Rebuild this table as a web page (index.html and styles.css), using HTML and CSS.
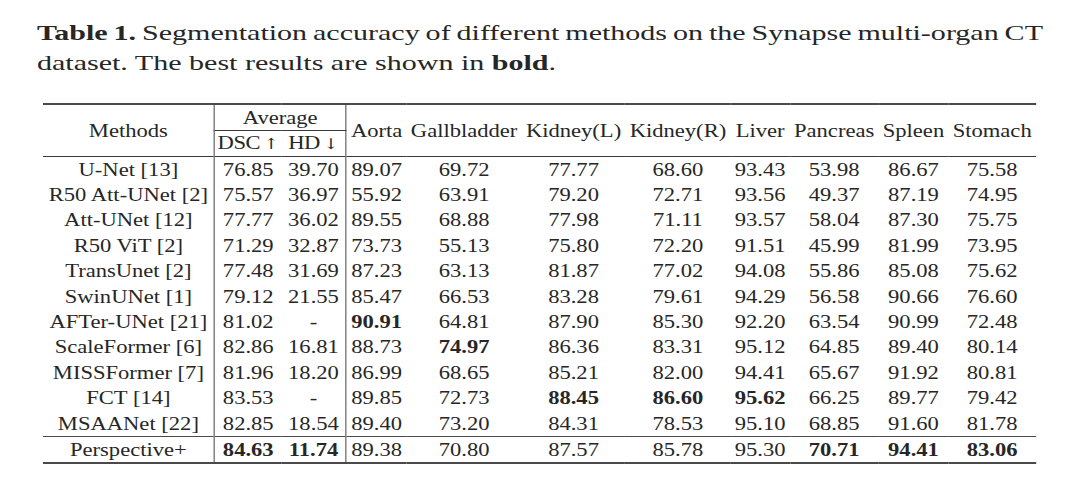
FILE: index.html
```html
<!DOCTYPE html>
<html>
<head>
<meta charset="utf-8">
<link rel="stylesheet" href="styles.css">
</head>
<body>
<div class="page">
  <div class="caption">
    <div class="cap-line first"><b>Table 1.</b> Segmentation accuracy of different methods on the Synapse multi-organ CT</div>
    <div class="cap-line">dataset. The best results are shown in <b>bold</b>.</div>
  </div>
  <table class="results">
    <thead>
      <tr class="hrow1">
        <th rowspan="2" class="method sep">Methods</th>
        <th colspan="2" class="avg sep">Average</th>
        <th rowspan="2">Aorta</th>
        <th rowspan="2">Gallbladder</th>
        <th rowspan="2">Kidney(L)</th>
        <th rowspan="2">Kidney(R)</th>
        <th rowspan="2">Liver</th>
        <th rowspan="2">Pancreas</th>
        <th rowspan="2">Spleen</th>
        <th rowspan="2">Stomach</th>
      </tr>
      <tr class="hrow2">
        <th class="metric dsc">DSC<span class="arrow">↑</span></th>
        <th class="metric hd sep">HD<span class="arrow">↓</span></th>
      </tr>
    </thead>
    <tbody>
      <tr><td class="method sep">U-Net [13]</td><td class="metric">76.85</td><td class="metric sep">39.70</td><td>89.07</td><td>69.72</td><td>77.77</td><td>68.60</td><td>93.43</td><td>53.98</td><td>86.67</td><td>75.58</td></tr>
      <tr><td class="method sep">R50 Att-UNet [2]</td><td class="metric">75.57</td><td class="metric sep">36.97</td><td>55.92</td><td>63.91</td><td>79.20</td><td>72.71</td><td>93.56</td><td>49.37</td><td>87.19</td><td>74.95</td></tr>
      <tr><td class="method sep">Att-UNet [12]</td><td class="metric">77.77</td><td class="metric sep">36.02</td><td>89.55</td><td>68.88</td><td>77.98</td><td>71.11</td><td>93.57</td><td>58.04</td><td>87.30</td><td>75.75</td></tr>
      <tr><td class="method sep">R50 ViT [2]</td><td class="metric">71.29</td><td class="metric sep">32.87</td><td>73.73</td><td>55.13</td><td>75.80</td><td>72.20</td><td>91.51</td><td>45.99</td><td>81.99</td><td>73.95</td></tr>
      <tr><td class="method sep">TransUnet [2]</td><td class="metric">77.48</td><td class="metric sep">31.69</td><td>87.23</td><td>63.13</td><td>81.87</td><td>77.02</td><td>94.08</td><td>55.86</td><td>85.08</td><td>75.62</td></tr>
      <tr><td class="method sep">SwinUNet [1]</td><td class="metric">79.12</td><td class="metric sep">21.55</td><td>85.47</td><td>66.53</td><td>83.28</td><td>79.61</td><td>94.29</td><td>56.58</td><td>90.66</td><td>76.60</td></tr>
      <tr><td class="method sep">AFTer-UNet [21]</td><td class="metric">81.02</td><td class="metric sep">-</td><td><b>90.91</b></td><td>64.81</td><td>87.90</td><td>85.30</td><td>92.20</td><td>63.54</td><td>90.99</td><td>72.48</td></tr>
      <tr><td class="method sep">ScaleFormer [6]</td><td class="metric">82.86</td><td class="metric sep">16.81</td><td>88.73</td><td><b>74.97</b></td><td>86.36</td><td>83.31</td><td>95.12</td><td>64.85</td><td>89.40</td><td>80.14</td></tr>
      <tr><td class="method sep">MISSFormer [7]</td><td class="metric">81.96</td><td class="metric sep">18.20</td><td>86.99</td><td>68.65</td><td>85.21</td><td>82.00</td><td>94.41</td><td>65.67</td><td>91.92</td><td>80.81</td></tr>
      <tr><td class="method sep">FCT [14]</td><td class="metric">83.53</td><td class="metric sep">-</td><td>89.85</td><td>72.73</td><td><b>88.45</b></td><td><b>86.60</b></td><td><b>95.62</b></td><td>66.25</td><td>89.77</td><td>79.42</td></tr>
      <tr><td class="method sep">MSAANet [22]</td><td class="metric">82.85</td><td class="metric sep">18.54</td><td>89.40</td><td>73.20</td><td>84.31</td><td>78.53</td><td>95.10</td><td>68.85</td><td>91.60</td><td>81.78</td></tr>
      <tr class="final"><td class="method sep">Perspective+</td><td class="metric"><b>84.63</b></td><td class="metric sep"><b>11.74</b></td><td>89.38</td><td>70.80</td><td>87.57</td><td>85.78</td><td>95.30</td><td><b>70.71</b></td><td><b>94.41</b></td><td><b>83.06</b></td></tr>
    </tbody>
  </table>
</div>
</body>
</html>
```

FILE: styles.css
```css
html, body {
  margin: 0;
  padding: 0;
  background: #ffffff;
}

body {
  width: 1080px;
  height: 485px;
  overflow: hidden;
  font-family: "Liberation Serif", "Times New Roman", serif;
  color: #262626;
}

.page {
  padding-top: 18px;
}

.caption {
  margin-left: 37px;
  width: 703.5px;
  font-size: 21px;
  line-height: 30px;
  transform: scaleX(1.43);
  transform-origin: 0 0;
}

.cap-line.first {
  white-space: nowrap;
  word-spacing: -3px;
  text-align: justify;
  text-align-last: justify;
}

.results {
  margin-top: 25px;
  margin-left: 43px;
  border-collapse: collapse;
  font-size: 18px;
  border-top: 2px solid #4a4a4a;
  border-bottom: 2px solid #4a4a4a;
  transform: scaleX(1.254);
  transform-origin: 0 0;
}

.results th,
.results td {
  font-weight: normal;
  text-align: center;
  padding: 0 3.4px;
  white-space: nowrap;
  line-height: 20px;
}

.results .method {
  padding: 0 4.6px;
}

.results .metric {
  padding: 0;
}

.results th.metric {
  letter-spacing: -0.4px;
}

.results th.dsc {
  width: 53px;
}

.results th.hd {
  width: 51px;
}

.results td b {
  font-weight: bold;
}

.arrow {
  font-family: "DejaVu Serif", serif;
  font-size: 15px;
  margin-left: 2.5px;
  letter-spacing: 0;
}

.results .sep {
  border-right: 1px solid #6a6a6a;
}

.hrow1 th,
.hrow2 th {
  height: 25px;
}

.results .avg {
  border-bottom: 1px solid #3a3a3a;
}

.results thead {
  border-bottom: 1px solid #3a3a3a;
}

.results tbody td {
  height: 25.4px;
}

.results tr.final td {
  border-top: 1.5px solid #4a4a4a;
  height: 25px;
}
```
